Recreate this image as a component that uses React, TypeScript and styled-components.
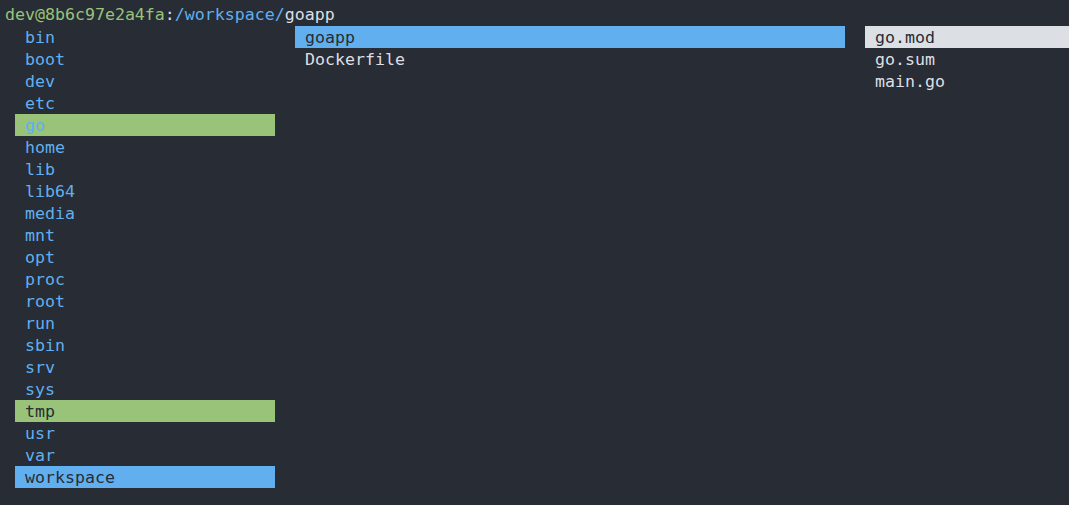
import React from "react";
import styled, { createGlobalStyle } from "styled-components";

const Global = createGlobalStyle`
  html, body { margin: 0; padding: 0; background: #282c34; }
  body { width: 1069px; height: 505px; overflow: hidden; }
`;

const Term = styled.div`
  box-sizing: border-box;
  width: 1069px;
  height: 505px;
  padding: 4px 0 0 5px;
  background: #282c34;
  font-family: "DejaVu Sans Mono", "Liberation Mono", monospace;
  font-size: 16.6px;
  line-height: 22px;
  color: #dcdfe4;
  white-space: pre;
  overflow: hidden;
`;

const Header = styled.div`
  height: 22px;
`;

const Seg = styled.span<{ $c: string }>`
  color: ${(p) => p.$c};
`;

const Columns = styled.div`
  display: grid;
  grid-template-columns: 260px 550px 1fr;
  column-gap: 20px;
  padding-left: 10px;
  align-items: start;
`;

const Column = styled.div`
  display: flex;
  flex-direction: column;
`;

type Tone = "dir" | "file" | "green" | "greenDir" | "blue" | "sel";

const bgOf: Record<Tone, string> = {
  dir: "transparent",
  file: "transparent",
  green: "#98c379",
  greenDir: "#98c379",
  blue: "#61afef",
  sel: "#dcdfe4",
};
const fgOf: Record<Tone, string> = {
  dir: "#61afef",
  file: "#dcdfe4",
  green: "#282c34",
  greenDir: "#61afef",
  blue: "#282c34",
  sel: "#282c34",
};

const Row = styled.div<{ $t: Tone }>`
  box-sizing: border-box;
  height: 22px;
  padding: 1px 0 0 10px;
  overflow: hidden;
  background: ${(p) => bgOf[p.$t]};
  color: ${(p) => fgOf[p.$t]};
`;

const left: [string, Tone][] = [
  ["bin", "dir"],
  ["boot", "dir"],
  ["dev", "dir"],
  ["etc", "dir"],
  ["go", "greenDir"],
  ["home", "dir"],
  ["lib", "dir"],
  ["lib64", "dir"],
  ["media", "dir"],
  ["mnt", "dir"],
  ["opt", "dir"],
  ["proc", "dir"],
  ["root", "dir"],
  ["run", "dir"],
  ["sbin", "dir"],
  ["srv", "dir"],
  ["sys", "dir"],
  ["tmp", "green"],
  ["usr", "dir"],
  ["var", "dir"],
  ["workspace", "blue"],
];

const middle: [string, Tone][] = [
  ["goapp", "blue"],
  ["Dockerfile", "file"],
];

const right: [string, Tone][] = [
  ["go.mod", "sel"],
  ["go.sum", "file"],
  ["main.go", "file"],
];

const List = ({ items }: { items: [string, Tone][] }) => (
  <Column>
    {items.map(([n, t]) => (
      <Row key={n} $t={t}>
        {n}
      </Row>
    ))}
  </Column>
);

export default function App() {
  return (
    <>
      <Global />
      <Term>
        <Header>
          <Seg $c="#98c379">dev@8b6c97e2a4fa</Seg>
          <Seg $c="#dcdfe4">:</Seg>
          <Seg $c="#61afef">/workspace/</Seg>
          <Seg $c="#dcdfe4">goapp</Seg>
        </Header>
        <Columns>
          <List items={left} />
          <List items={middle} />
          <List items={right} />
        </Columns>
      </Term>
    </>
  );
}
